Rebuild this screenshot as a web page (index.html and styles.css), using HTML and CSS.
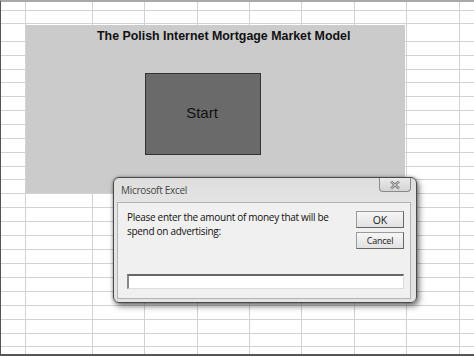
FILE: index.html
```html
<!DOCTYPE html>
<html>
<head>
<meta charset="utf-8">
<link rel="stylesheet" href="styles.css">
</head>
<body>
<div class="sheet">
  <div class="grid">
    <div class="row h9"><i></i><i></i><i></i><i></i><i></i><i></i><i></i><i></i><i></i><i></i></div>
    <div class="row h13"><i></i><i></i><i></i><i></i><i></i><i></i><i></i><i></i><i></i><i></i></div>
    <div class="row h18"><i></i><i></i><i></i><i></i><i></i><i></i><i></i><i></i><i></i><i></i></div>
    <div class="row h14"><i></i><i></i><i></i><i></i><i></i><i></i><i></i><i></i><i></i><i></i></div>
    <div class="row h14"><i></i><i></i><i></i><i></i><i></i><i></i><i></i><i></i><i></i><i></i></div>
    <div class="row h13"><i></i><i></i><i></i><i></i><i></i><i></i><i></i><i></i><i></i><i></i></div>
    <div class="row h14"><i></i><i></i><i></i><i></i><i></i><i></i><i></i><i></i><i></i><i></i></div>
    <div class="row h14"><i></i><i></i><i></i><i></i><i></i><i></i><i></i><i></i><i></i><i></i></div>
    <div class="row h14"><i></i><i></i><i></i><i></i><i></i><i></i><i></i><i></i><i></i><i></i></div>
    <div class="row h14"><i></i><i></i><i></i><i></i><i></i><i></i><i></i><i></i><i></i><i></i></div>
    <div class="row h14"><i></i><i></i><i></i><i></i><i></i><i></i><i></i><i></i><i></i><i></i></div>
    <div class="row h14"><i></i><i></i><i></i><i></i><i></i><i></i><i></i><i></i><i></i><i></i></div>
    <div class="row h13"><i></i><i></i><i></i><i></i><i></i><i></i><i></i><i></i><i></i><i></i></div>
    <div class="row h14"><i></i><i></i><i></i><i></i><i></i><i></i><i></i><i></i><i></i><i></i></div>
    <div class="row h14"><i></i><i></i><i></i><i></i><i></i><i></i><i></i><i></i><i></i><i></i></div>
    <div class="row h14"><i></i><i></i><i></i><i></i><i></i><i></i><i></i><i></i><i></i><i></i></div>
    <div class="row h14"><i></i><i></i><i></i><i></i><i></i><i></i><i></i><i></i><i></i><i></i></div>
    <div class="row h14"><i></i><i></i><i></i><i></i><i></i><i></i><i></i><i></i><i></i><i></i></div>
    <div class="row h14"><i></i><i></i><i></i><i></i><i></i><i></i><i></i><i></i><i></i><i></i></div>
    <div class="row h14"><i></i><i></i><i></i><i></i><i></i><i></i><i></i><i></i><i></i><i></i></div>
    <div class="row h14"><i></i><i></i><i></i><i></i><i></i><i></i><i></i><i></i><i></i><i></i></div>
    <div class="row h14"><i></i><i></i><i></i><i></i><i></i><i></i><i></i><i></i><i></i><i></i></div>
    <div class="row h14"><i></i><i></i><i></i><i></i><i></i><i></i><i></i><i></i><i></i><i></i></div>
    <div class="row h14"><i></i><i></i><i></i><i></i><i></i><i></i><i></i><i></i><i></i><i></i></div>
    <div class="row h13"><i></i><i></i><i></i><i></i><i></i><i></i><i></i><i></i><i></i><i></i></div>
    <div class="row last"><i></i><i></i><i></i><i></i><i></i><i></i><i></i><i></i><i></i><i></i></div>
  </div>

  <div class="panel">
    <div class="panel-title">The Polish Internet Mortgage Market Model</div>
    <div class="start-btn">Start</div>
  </div>

  <div class="dialog">
    <div class="titlebar">
      <span class="caption">Microsoft Excel</span>
      <span class="close">
        <svg width="12" height="10" viewBox="0 0 12 10">
          <path d="M2 1.5 L10 8.5 M10 1.5 L2 8.5" stroke="#777" stroke-width="2.4" fill="none"/>
          <path d="M2 1.5 L10 8.5 M10 1.5 L2 8.5" stroke="#e8e8e8" stroke-width="0.8" fill="none"/>
        </svg>
      </span>
    </div>
    <div class="body">
      <div class="top">
        <div class="msg">Please enter the amount of money that will be spend on advertising:</div>
        <div class="buttons">
          <div class="btn ok">OK</div>
          <div class="btn">Cancel</div>
        </div>
      </div>
      <div class="input"></div>
    </div>
  </div>
</div>
</body>
</html>
```

FILE: styles.css
```css
html, body {
  margin: 0;
  padding: 0;
  background: #fff;
}
.sheet {
  position: relative;
  width: 474px;
  height: 356px;
  overflow: hidden;
  box-sizing: border-box;
  border-top: 2px solid #a8a8a8;
  border-left: 1px solid #555;
  border-bottom: 2px solid #555;
  font-family: "Liberation Sans", Arial, sans-serif;
}
.grid {
  display: flex;
  flex-direction: column;
}
.row {
  display: flex;
  flex: none;
}
.row i {
  display: block;
  box-sizing: border-box;
  height: 100%;
  border-right: 1px solid #d2d2d2;
  border-bottom: 1px solid #d2d2d2;
  flex: none;
}
.row.last i { border-bottom: none; }
.h9 { height: 9px; }
.h13 { height: 13px; }
.h14 { height: 14px; }
.h18 { height: 18px; }
.last { height: 7px; }
.row i:nth-child(1) { width: 25px; }
.row i:nth-child(2) { width: 67px; }
.row i:nth-child(3) { width: 52px; }
.row i:nth-child(4) { width: 53px; }
.row i:nth-child(5) { width: 52px; }
.row i:nth-child(6) { width: 52px; }
.row i:nth-child(7) { width: 53px; }
.row i:nth-child(8) { width: 52px; }
.row i:nth-child(9) { width: 53px; }
.row i:nth-child(10) { width: 20px; border-right: none; }

.panel {
  position: absolute;
  left: 25px;
  top: 23px;
  width: 379px;
  height: 168px;
  background: #cbcbcb;
  display: flex;
  flex-direction: column;
}
.panel-title {
  font-weight: bold;
  font-size: 12.4px;
  color: #111;
  padding: 4px 0 0 71px;
  line-height: 15px;
  white-space: nowrap;
}
.start-btn {
  margin: 29px 0 0 119px;
  width: 116px;
  height: 82px;
  background: #6a6a6a;
  border: 1px solid #333;
  color: #111;
  font-size: 15px;
  display: flex;
  align-items: center;
  justify-content: center;
  padding: 0 2px 4px 0;
  box-sizing: border-box;
}

.dialog {
  position: absolute;
  left: 112px;
  top: 175px;
  width: 304px;
  height: 126px;
  box-sizing: border-box;
  border: 1px solid #4a4a4a;
  border-radius: 6px;
  background: linear-gradient(#dedede, #e6e6e6 30%, #e2e2e2);
  box-shadow: 2px 3px 6px rgba(0,0,0,0.55), 0 0 3px rgba(0,0,0,0.3);
  display: flex;
  flex-direction: column;
  padding: 0 5px 3px 3px;
  font-family: "Open Sans", "Noto Sans", sans-serif;
}
.titlebar {
  height: 24px;
  display: flex;
  align-items: flex-start;
  justify-content: space-between;
  flex: none;
}
.caption {
  font-size: 10px;
  letter-spacing: -0.3px;
  color: #444;
  padding: 5px 0 0 4px;
  line-height: 14px;
}
.close {
  width: 32px;
  height: 14px;
  box-sizing: border-box;
  border: 1px solid #8a8a8a;
  border-top: none;
  border-radius: 0 0 4px 4px;
  background: linear-gradient(#eaeaea, #d4d4d4);
  display: flex;
  align-items: center;
  justify-content: center;
}
.body {
  flex: 1;
  background: #f0f0f0;
  border: 1px solid #b4b4b4;
  display: flex;
  flex-direction: column;
  padding: 7px 6px 9px 9px;
  box-sizing: border-box;
}
.top {
  display: flex;
  justify-content: space-between;
  flex: 1;
}
.msg {
  width: 215px;
  font-size: 10px;
  letter-spacing: -0.3px;
  line-height: 14px;
  color: #111;
}
.buttons {
  display: flex;
  flex-direction: column;
  gap: 4px;
  padding-top: 1px;
}
.btn {
  width: 48px;
  height: 17px;
  box-sizing: border-box;
  border: 1px solid #9a9a9a;
  border-right-color: #666;
  border-bottom-color: #666;
  background: linear-gradient(#f6f6f6, #e2e2e2);
  font-size: 9px;
  letter-spacing: -0.2px;
  color: #222;
  display: flex;
  align-items: center;
  justify-content: center;
}
.btn.ok { font-size: 10.5px; letter-spacing: 0; }
.input {
  height: 15px;
  box-sizing: border-box;
  background: #fff;
  border: 1px solid #ddd;
  border-top: 2px solid #666;
  border-left: 2px solid #888;
}
```
